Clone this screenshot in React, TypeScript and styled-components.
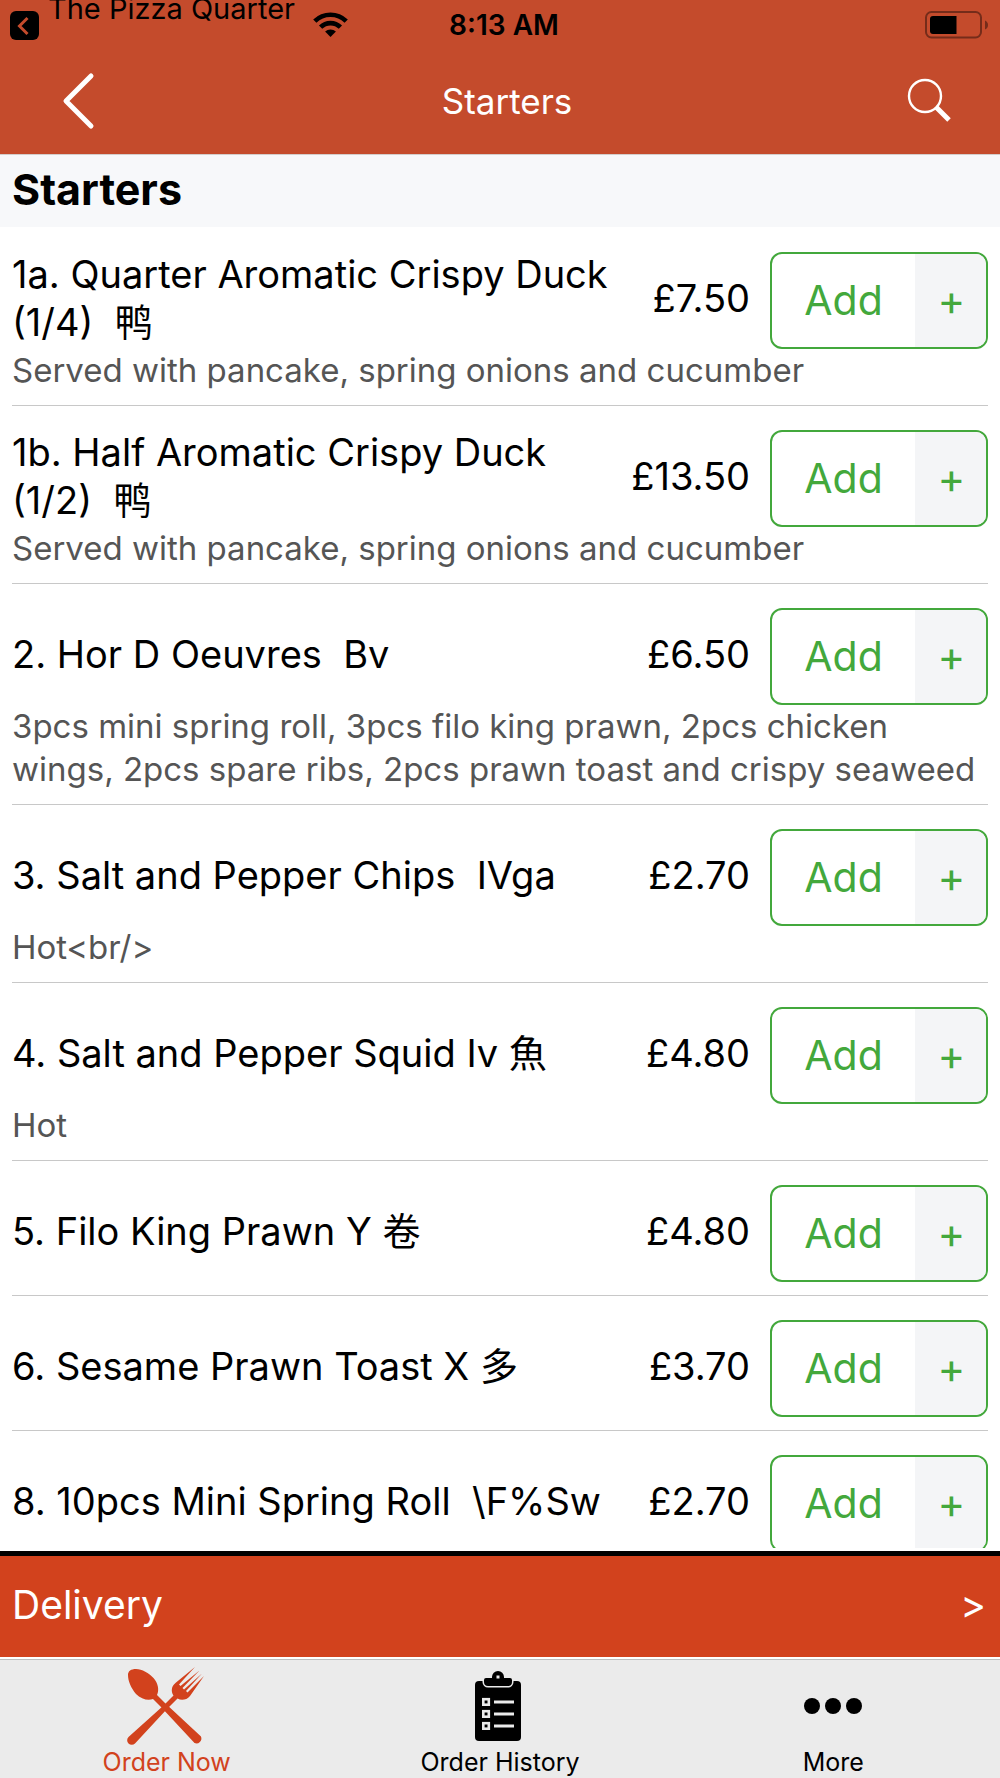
import React from 'react';
import styled, { createGlobalStyle } from 'styled-components';

const GlobalStyle = createGlobalStyle`
  *, *::before, *::after { box-sizing: border-box; }
  body {
    margin: 0;
    background: #fff;
    color: #000;
    font-family: Inter, "Noto Sans CJK SC", sans-serif;
  }
  button { font: inherit; color: inherit; border: 0; padding: 0; background: none; cursor: pointer; }
`;

const Screen = styled.div`
  display: flex;
  flex-direction: column;
  height: 100vh;
`;

const Header = styled.header`
  flex: none;
  background: #c44b2c;
  border-bottom: 1px solid #d3cdcb;
`;

const StatusBar = styled.div`
  display: grid;
  grid-template-columns: 1fr auto 1fr;
  align-items: center;
  height: 50px;
  padding: 0 12px 0 10px;
  overflow: hidden;
`;

const StatusLeft = styled.div`
  display: flex;
  align-items: center;
`;

const ReturnApp = styled.span`
  height: 50px;
  margin: 0 18px 0 9px;
  font-size: 29px;
  line-height: 17px;
  white-space: nowrap;
`;

const Clock = styled.span`
  padding-left: 10px;
  font-size: 28px;
  font-weight: 600;
  line-height: 50px;
`;

const StatusRight = styled.div`
  display: flex;
  justify-content: flex-end;
`;

const NavBar = styled.nav`
  display: grid;
  grid-template-columns: 1fr auto 1fr;
  align-items: center;
  height: 104px;
  padding: 0 46px 2px 60px;
`;

const NavTitle = styled.h1`
  margin: 0;
  font-size: 35px;
  font-weight: 400;
  line-height: 102px;
  color: #fff;
`;

const NavButton = styled.button<{ $end?: boolean }>`
  display: flex;
  justify-self: ${(p) => (p.$end ? 'end' : 'start')};
`;

const SectionTitle = styled.h2`
  flex: none;
  margin: 0;
  padding: 0 12px;
  background: #f7f8fa;
  font-size: 43px;
  font-weight: 700;
  line-height: 68px;
  height: 72px;
`;

const Menu = styled.ul`
  flex: 1;
  min-height: 0;
  margin: 0 0 3px;
  padding: 1px 12px 0;
  list-style: none;
  overflow-y: auto;
  scrollbar-width: none;
`;

const MenuRow = styled.li`
  padding: 24px 0 13px;
  border-bottom: 1px solid #c8c8c8;
`;

const RowMain = styled.div`
  display: flex;
  align-items: center;
  min-height: 97px;
`;

const DishName = styled.h3`
  flex: 1;
  margin: -5px 0 0;
  font-size: 38px;
  font-weight: 400;
  line-height: 48px;
  white-space: pre-wrap;
`;

const Price = styled.span`
  margin-top: -5px;
  padding: 0 20px;
  font-size: 38px;
  line-height: 48px;
`;

const AddButton = styled.button`
  display: grid;
  grid-template-columns: 1fr 71px;
  width: 218px;
  height: 97px;
  border: 2px solid #43a83c;
  border-radius: 12px;
  overflow: hidden;
  color: #43a83c;
  background: #fff;
`;

const AddLabel = styled.span`
  font-size: 41px;
  line-height: 93px;
`;

const AddPlus = styled.span`
  padding-left: 2px;
  background: #f4f5f7;
  font-size: 42px;
  line-height: 92px;
`;

const Description = styled.p`
  margin: 0;
  font-size: 33px;
  line-height: 43px;
  color: #555;
`;

const DeliveryBar = styled.button`
  flex: none;
  display: flex;
  align-items: center;
  justify-content: space-between;
  height: 106px;
  padding: 0 14px 4px 12px;
  border-top: 5px solid #000;
  background: #d2421d;
  color: #fff;
  font-size: 39px;
  line-height: 48px;
`;

const TabBar = styled.nav`
  flex: none;
  display: grid;
  grid-template-columns: repeat(3, 1fr);
  height: 119px;
  margin-top: 2px;
  border-top: 1px solid #bdbdbd;
  background: #ebebeb;
`;

const Tab = styled.a<{ $active?: boolean }>`
  display: flex;
  flex-direction: column;
  align-items: center;
  justify-content: space-between;
  padding: 6px 0 1px;
  color: ${(p) => (p.$active ? '#d2421d' : '#000')};
  font-size: 25px;
  line-height: 32px;
  text-decoration: none;
`;

const IconSlot = styled.span`
  display: flex;
  align-items: center;
  height: 80px;
`;

const dishes = [
  { name: '1a. Quarter Aromatic Crispy Duck (1/4)  鸭', price: '£7.50', text: 'Served with pancake, spring onions and cucumber' },
  { name: '1b. Half Aromatic Crispy Duck (1/2)  鸭', price: '£13.50', text: 'Served with pancake, spring onions and cucumber' },
  {
    name: '2. Hor D Oeuvres  Bv',
    price: '£6.50',
    text: '3pcs mini spring roll, 3pcs filo king prawn, 2pcs chicken wings, 2pcs spare ribs, 2pcs prawn toast and crispy seaweed',
  },
  { name: '3. Salt and Pepper Chips  IVga', price: '£2.70', text: 'Hot<br/>' },
  { name: '4. Salt and Pepper Squid Iv 魚', price: '£4.80', text: 'Hot' },
  { name: '5. Filo King Prawn Y 卷', price: '£4.80' },
  { name: '6. Sesame Prawn Toast X 多', price: '£3.70' },
  { name: '8. 10pcs Mini Spring Roll  \\F%Sw', price: '£2.70' },
];

const ReturnIcon = () => (
  <svg width="29" height="30" viewBox="0 0 29 30" aria-hidden="true">
    <rect width="29" height="29" y="1" rx="6" fill="#000" />
    <path d="M17.5 8 9.5 16l8 8" fill="none" stroke="#c44b2c" strokeWidth="3" />
  </svg>
);

const WifiIcon = () => (
  <svg width="35" height="26" viewBox="0 0 35 26" aria-hidden="true">
    <g fill="none" stroke="#000" strokeWidth="4.6">
      <path d="M1.8 9.2a22.4 22.4 0 0 1 31.4 0" />
      <path d="M7.6 15.2a14 14 0 0 1 19.8 0" />
    </g>
    <path d="M17.5 25l-5.4-5.4a7.8 7.8 0 0 1 10.8 0z" fill="#000" />
  </svg>
);

const BatteryIcon = () => (
  <svg width="63" height="28" viewBox="0 0 63 28" aria-hidden="true">
    <rect x="1" y="1" width="55" height="25.500" rx="5.500" fill="none" stroke="#752c1a" strokeWidth="2" />
    <path d="M8 5h23.500v18H8a3 3 0 0 1-3-3V8a3 3 0 0 1 3-3z" fill="#000" />
    <path d="M60 9.500q3 1.500 3 4.500t-3 4.500z" fill="#752c1a" />
  </svg>
);

const BackIcon = () => (
  <svg width="36" height="60" viewBox="0 0 36 60" aria-hidden="true">
    <path d="M31 5 6 30l25 25" fill="none" stroke="#fff" strokeWidth="5" strokeLinecap="round" strokeLinejoin="round" />
  </svg>
);

const SearchIcon = () => (
  <svg width="47" height="46" viewBox="0 0 47 46" aria-hidden="true">
    <circle cx="18" cy="18" r="16" fill="none" stroke="#fff" strokeWidth="2.4" />
    <path d="M29 29l13 13" stroke="#fff" strokeWidth="5" />
  </svg>
);

const UtensilsIcon = () => (
  <svg width="82" height="78" viewBox="0 0 82 78" fill="currentColor" aria-hidden="true">
    <path d="M2 8C2 4 5 2 10 2c6 0 13 4 17.500 9 4.500 5 6 12 3.500 17l8.500 8.500L75 69.500a5 5 0 0 1-6.500 6.500L35 40l-8-8c-5 2-12 0-17-5C5 21 2 14 2 8z" />
    <path d="M69 0 50 15.500C45.500 19 44.500 24 47.500 28.500L37 39 2.500 70a4.500 4.500 0 0 0 6.500 6.500L41 42l10.500-10.500c4 2.500 9 1.500 12.500-2.500L78 9 61.500 25.500 60 24 76 6.500 58 22.500 56.500 21 73.500 3.500 54.500 19 53 17.500z" />
  </svg>
);

const ClipboardIcon = () => (
  <svg width="52" height="72" viewBox="0 0 52 72" aria-hidden="true">
    <rect x="1" y="11" width="46" height="60" rx="4" fill="#000" />
    <path
      d="M12 8h6V7a6 6 0 0 1 12 0v1h6a2 2 0 0 1 2 2v2a4 4 0 0 1-4 4H14a4 4 0 0 1-4-4v-2a2 2 0 0 1 2-2z"
      fill="#000"
      stroke="#ebebeb"
      strokeWidth="3"
      paintOrder="stroke"
    />
    <rect x="22.500" y="5.500" width="3" height="3" fill="#ebebeb" />
    {[32, 44, 56].map((y) => (
      <g key={y} fill="none" stroke="#ebebeb">
        <rect x="9.300" y={y - 2.8} width="5.500" height="5.500" strokeWidth="2.6" />
        <path d={`M20 ${y}h20`} strokeWidth="3" />
      </g>
    ))}
  </svg>
);

const MoreIcon = () => (
  <svg width="60" height="78" viewBox="0 0 60 78" fill="currentColor" aria-hidden="true">
    <circle cx="9" cy="39" r="8" />
    <circle cx="30" cy="39" r="8" />
    <circle cx="51" cy="39" r="8" />
  </svg>
);

export default function App() {
  return (
    <>
      <GlobalStyle />
      <Screen>
        <Header>
          <StatusBar>
            <StatusLeft>
              <ReturnIcon />
              <ReturnApp>The Pizza Quarter</ReturnApp>
              <WifiIcon />
            </StatusLeft>
            <Clock>8:13 AM</Clock>
            <StatusRight>
              <BatteryIcon />
            </StatusRight>
          </StatusBar>
          <NavBar>
            <NavButton aria-label="Back">
              <BackIcon />
            </NavButton>
            <NavTitle>Starters</NavTitle>
            <NavButton $end aria-label="Search">
              <SearchIcon />
            </NavButton>
          </NavBar>
        </Header>
        <SectionTitle>Starters</SectionTitle>
        <Menu>
          {dishes.map((dish) => (
            <MenuRow key={dish.name}>
              <RowMain>
                <DishName>{dish.name}</DishName>
                <Price>{dish.price}</Price>
                <AddButton>
                  <AddLabel>Add</AddLabel>
                  <AddPlus>+</AddPlus>
                </AddButton>
              </RowMain>
              {dish.text && <Description>{dish.text}</Description>}
            </MenuRow>
          ))}
        </Menu>
        <DeliveryBar>
          <span>Delivery</span>
          <span>&gt;</span>
        </DeliveryBar>
        <TabBar>
          <Tab href="#order" $active>
            <IconSlot>
              <UtensilsIcon />
            </IconSlot>
            Order Now
          </Tab>
          <Tab href="#history">
            <IconSlot>
              <ClipboardIcon />
            </IconSlot>
            Order History
          </Tab>
          <Tab href="#more">
            <IconSlot>
              <MoreIcon />
            </IconSlot>
            More
          </Tab>
        </TabBar>
      </Screen>
    </>
  );
}
